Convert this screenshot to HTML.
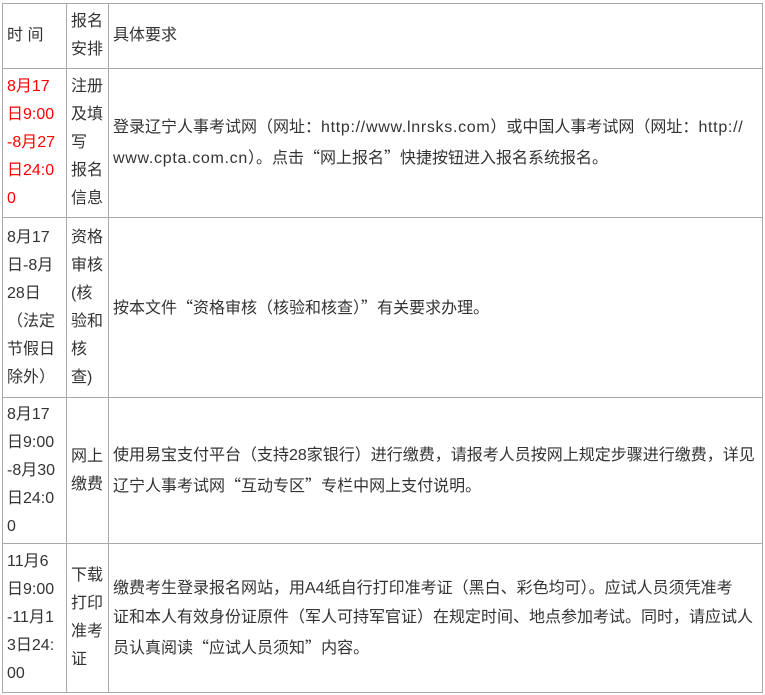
<!DOCTYPE html>
<html><head><meta charset="utf-8"><style>
body{margin:0;background:#fff;width:765px;height:695px;overflow:hidden;font-family:"Liberation Sans","Noto Sans CJK SC",sans-serif;font-size:16px;color:#333}
.c{position:absolute;display:flex;align-items:center;white-space:nowrap;box-sizing:border-box;padding-left:5px;line-height:28px}
.t{line-height:29px}
.h{position:absolute;background:#aaa;height:1px;left:2px;width:761px}
.v{position:absolute;background:#aaa;width:1px;top:3px;height:690px}
.r{color:#f00}
.q{font-family:"Noto Sans CJK SC",sans-serif}
.l{letter-spacing:0.7px}
</style></head><body>
<div class="h" style="top:3px"></div>
<div class="h" style="top:68px"></div>
<div class="h" style="top:217px"></div>
<div class="h" style="top:397px"></div>
<div class="h" style="top:543px"></div>
<div class="h" style="top:692px"></div>
<div class="v" style="left:2px"></div>
<div class="v" style="left:66px"></div>
<div class="v" style="left:108px"></div>
<div class="v" style="left:762px"></div>

<div class="c" style="left:2px;top:4px;width:64px;height:64px">时 间</div>
<div class="c" style="left:66px;top:4px;width:42px;height:64px">报名<br>安排</div>
<div class="c" style="left:108px;top:4px;width:654px;height:64px">具体要求</div>

<div class="c r" style="left:2px;top:69px;width:64px;height:148px">8月17<br>日9:00<br>-8月27<br>日24:0<br>0</div>
<div class="c" style="left:66px;top:69px;width:42px;height:148px">注册<br>及填<br>写<br>报名<br>信息</div>
<div class="c t" style="left:108px;top:69px;width:654px;height:148px"><div>登录辽宁人事考试网（网址：<span class="l">http://www.lnrsks.com</span>）或中国人事考试网（网址：<span class="l">http://</span><br><span class="l">www.cpta.com.cn</span>）。点击<span class="q">“</span>网上报名<span class="q">”</span>快捷按钮进入报名系统报名。</div></div>

<div class="c" style="left:2px;top:218px;width:64px;height:179px">8月17<br>日-8月<br>28日<br>（法定<br>节假日<br>除外）</div>
<div class="c" style="left:66px;top:218px;width:42px;height:179px">资格<br>审核<br>(核<br>验和<br>核<br>查)</div>
<div class="c t" style="left:108px;top:218px;width:654px;height:179px"><div>按本文件<span class="q">“</span>资格审核（核验和核查）<span class="q">”</span>有关要求办理。</div></div>

<div class="c" style="left:2px;top:398px;width:64px;height:145px">8月17<br>日9:00<br>-8月30<br>日24:0<br>0</div>
<div class="c" style="left:66px;top:398px;width:42px;height:145px">网上<br>缴费</div>
<div class="c t" style="left:108px;top:398px;width:654px;height:145px"><div>使用易宝支付平台（支持28家银行）进行缴费，请报考人员按网上规定步骤进行缴费，详见<br>辽宁人事考试网<span class="q">“</span>互动专区<span class="q">”</span>专栏中网上支付说明。</div></div>

<div class="c" style="left:2px;top:544px;width:64px;height:148px">11月6<br>日9:00<br>-11月1<br>3日24:<br>00</div>
<div class="c" style="left:66px;top:544px;width:42px;height:148px">下载<br>打印<br>准考<br>证</div>
<div class="c t" style="left:108px;top:544px;width:654px;height:148px"><div>缴费考生登录报名网站，用A4纸自行打印准考证（黑白、彩色均可）。应试人员须凭准考<br>证和本人有效身份证原件（军人可持军官证）在规定时间、地点参加考试。同时，请应试人<br>员认真阅读<span class="q">“</span>应试人员须知<span class="q">”</span>内容。</div></div>
</body></html>
